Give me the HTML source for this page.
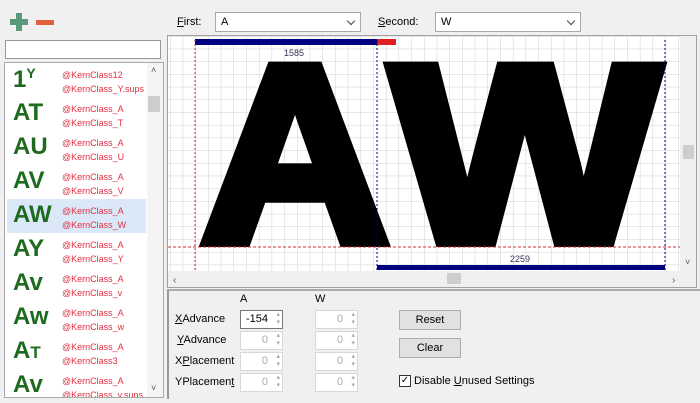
<!DOCTYPE html>
<html><head><style>
*{box-sizing:border-box;margin:0;padding:0}
body{width:700px;height:403px;background:#f0f0f0;font-family:"Liberation Sans",sans-serif;font-size:11px;color:#000;position:relative;overflow:hidden}
.a{position:absolute}
.combo{position:absolute;height:20px;background:#fff;border:1px solid #a8a8a8;padding:3px 5px;font-size:11px}
.combo:after{content:"";position:absolute;right:6px;top:5px;width:5px;height:5px;border-right:1px solid #444;border-bottom:1px solid #444;transform:rotate(45deg)}
.item{position:absolute;left:2px;width:139px;height:34px}
.g{position:absolute;left:6px;top:2px;font-size:24px;font-weight:bold;color:#1e6a1e}
.r{position:absolute;left:55px;color:#e03040;font-size:9px}
.spin{position:absolute;width:43px;height:19px;background:#fff;border:1px solid #d8d8d8;font-size:11px;color:#aaa;text-align:right;padding:2px 14px 0 0}
.spin:after{content:"▴\A▾";white-space:pre;position:absolute;right:2px;top:0;font-size:7px;line-height:8px;color:#aaa}
.lbl{position:absolute;left:175px;font-size:11px}
.btn{position:absolute;left:399px;width:62px;height:20px;background:#e1e1e1;border:1px solid #adadad;text-align:center;padding-top:3px}
</style></head><body>
<div class="a" style="left:10px;top:19px;width:18px;height:6px;background:#5a9a7a"></div>
<div class="a" style="left:16px;top:13px;width:6px;height:18px;background:#5a9a7a"></div>
<div class="a" style="left:36px;top:20px;width:18px;height:5px;background:#e06040"></div>

<div class="a" style="left:177px;top:16px"><u>F</u>irst:</div>
<div class="combo" style="left:215px;top:12px;width:146px">A</div>
<div class="a" style="left:378px;top:16px"><u>S</u>econd:</div>
<div class="combo" style="left:435px;top:12px;width:146px">W</div>

<div class="a" style="left:5px;top:40px;width:156px;height:19px;background:#fff;border:1px solid #999"></div>
<div class="a" style="left:4px;top:62px;width:160px;height:336px;background:#fff;border:1px solid #aaa;overflow:hidden">
 <div class="item" style="top:0"><div class="g">1<sup style="font-size:14px">Y</sup></div><div class="r" style="top:7px">@KernClass12</div><div class="r" style="top:21px">@KernClass_Y.sups</div></div>
 <div class="item" style="top:34px"><div class="g">AT</div><div class="r" style="top:7px">@KernClass_A</div><div class="r" style="top:21px">@KernClass_T</div></div>
 <div class="item" style="top:68px"><div class="g">AU</div><div class="r" style="top:7px">@KernClass_A</div><div class="r" style="top:21px">@KernClass_U</div></div>
 <div class="item" style="top:102px"><div class="g">AV</div><div class="r" style="top:7px">@KernClass_A</div><div class="r" style="top:21px">@KernClass_V</div></div>
 <div class="item" style="top:136px;background:#dbe8f8"><div class="g">AW</div><div class="r" style="top:7px">@KernClass_A</div><div class="r" style="top:21px">@KernClass_W</div></div>
 <div class="item" style="top:170px"><div class="g">AY</div><div class="r" style="top:7px">@KernClass_A</div><div class="r" style="top:21px">@KernClass_Y</div></div>
 <div class="item" style="top:204px"><div class="g">Av</div><div class="r" style="top:7px">@KernClass_A</div><div class="r" style="top:21px">@KernClass_v</div></div>
 <div class="item" style="top:238px"><div class="g">Aw</div><div class="r" style="top:7px">@KernClass_A</div><div class="r" style="top:21px">@KernClass_w</div></div>
 <div class="item" style="top:272px"><div class="g">A<span style="font-size:17px">T</span></div><div class="r" style="top:7px">@KernClass_A</div><div class="r" style="top:21px">@KernClass3</div></div>
 <div class="item" style="top:306px"><div class="g">Av</div><div class="r" style="top:7px">@KernClass_A</div><div class="r" style="top:21px">@KernClass_v.sups</div></div>
 <div class="a" style="left:142px;top:0;width:16px;height:334px;background:#f4f4f4"></div>
 <div class="a" style="left:143px;top:33px;width:12px;height:16px;background:#cdcdcd"></div>
 <div class="a" style="left:146px;top:2px;font-size:9px;color:#555">˄</div>
 <div class="a" style="left:146px;top:320px;font-size:9px;color:#555">˅</div>
</div>

<svg class="a" style="left:167px;top:35px" width="530" height="253" viewBox="167 35 530 253">
 <defs><pattern id="gr" x="170" y="36" width="12.7" height="12.7" patternUnits="userSpaceOnUse"><path d="M0 0H12.7M0 0V12.7" stroke="#cfcfcf" stroke-width="1" fill="none"/></pattern></defs>
 <rect x="168" y="36" width="512" height="235" fill="#fff"/>
 <rect x="168" y="36" width="512" height="235" fill="url(#gr)"/>
 <rect x="167.5" y="35.5" width="529" height="252" fill="none" stroke="#a0a0a0"/>
 <rect x="195" y="39" width="182" height="6" fill="#000080"/>
 <rect x="377" y="39" width="19" height="6" fill="#e02020"/>
 <g font-family="Liberation Sans" style="font-weight:bold" stroke="#000" stroke-width="12" stroke-linejoin="miter">
 <text x="201" y="241" font-size="252" textLength="188" lengthAdjust="spacingAndGlyphs">A</text>
 <text x="391" y="241" font-size="252" textLength="268" lengthAdjust="spacingAndGlyphs">W</text>
 </g>
 <text x="294" y="56" font-size="9" fill="#335" text-anchor="middle" font-family="Liberation Sans">1585</text>
 <line x1="195" y1="40" x2="195" y2="271" stroke="#d03030" stroke-dasharray="2,2"/>
 <line x1="168" y1="247" x2="680" y2="247" stroke="#d03030" stroke-dasharray="3,2"/>
 <line x1="377" y1="40" x2="377" y2="271" stroke="#000080" stroke-dasharray="2,2"/>
 <line x1="665" y1="40" x2="665" y2="271" stroke="#000080" stroke-dasharray="2,2"/>
 <rect x="377" y="265" width="288" height="5" fill="#000080"/>
 <text x="520" y="262" font-size="9" fill="#335" text-anchor="middle" font-family="Liberation Sans">2259</text>
 <rect x="680" y="36" width="16" height="235" fill="#f0f0f0"/>
 <rect x="683" y="145" width="11" height="14" fill="#cdcdcd"/>
 <rect x="168" y="271" width="528" height="16" fill="#f0f0f0"/>
 <rect x="447" y="273" width="14" height="11" fill="#cdcdcd"/>
 <text x="173" y="283" font-size="10" fill="#555">‹</text>
 <text x="672" y="283" font-size="10" fill="#555">›</text>
 <text x="685" y="265" font-size="9" fill="#555">˅</text>
</svg>

<div class="a" style="left:167px;top:289px;width:533px;height:110px;border-left:2px solid #999;border-top:2px solid #aaa"></div>
<div class="a" style="left:240px;top:293px">A</div>
<div class="a" style="left:315px;top:293px">W</div>
<div class="lbl" style="top:313px"><u>X</u>Advance</div>
<div class="lbl" style="top:334px;left:177px"><u>Y</u>Advance</div>
<div class="lbl" style="top:355px">X<u>P</u>lacement</div>
<div class="lbl" style="top:376px">YPlacemen<u>t</u></div>
<div class="spin" style="left:240px;top:310px;color:#000;border-color:#777">-154</div>
<div class="spin" style="left:240px;top:331px">0</div>
<div class="spin" style="left:240px;top:352px">0</div>
<div class="spin" style="left:240px;top:373px">0</div>
<div class="spin" style="left:315px;top:310px">0</div>
<div class="spin" style="left:315px;top:331px">0</div>
<div class="spin" style="left:315px;top:352px">0</div>
<div class="spin" style="left:315px;top:373px">0</div>
<div class="btn" style="top:310px">Reset</div>
<div class="btn" style="top:338px">Clear</div>
<div class="a" style="left:399px;top:375px;width:12px;height:12px;border:1px solid #333;background:#fff;font-size:10px;line-height:10px;text-align:center">✓</div>
<div class="a" style="left:414px;top:375px">Disable <u>U</u>nused Settings</div>
</body></html>
